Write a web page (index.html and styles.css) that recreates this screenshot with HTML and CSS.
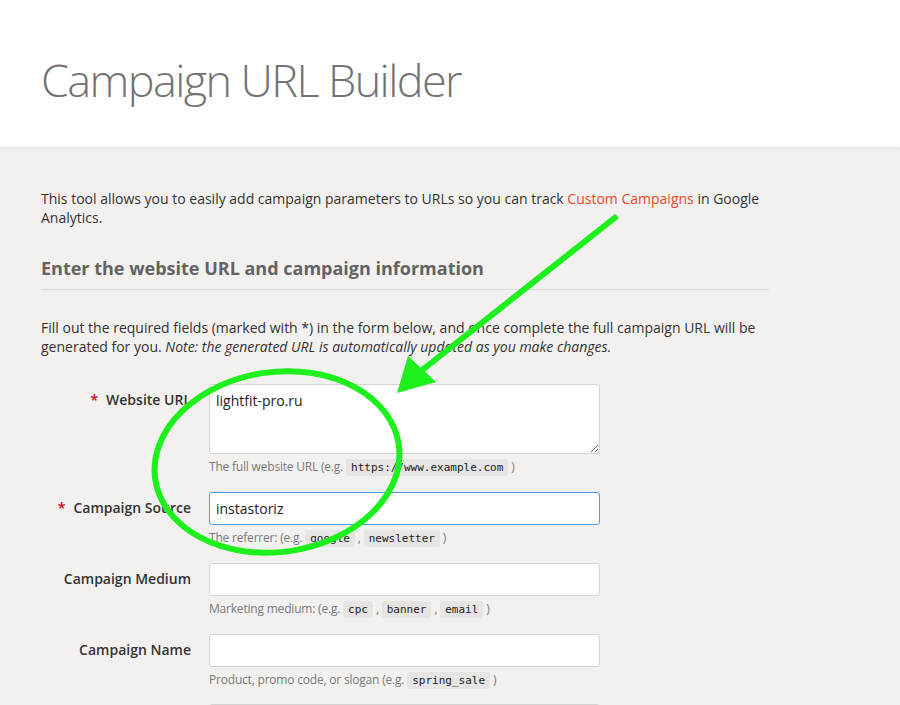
FILE: index.html
```html
<!DOCTYPE html>
<html lang="en">
  <head>
    <meta charset="UTF-8" />
    <meta name="viewport" content="width=device-width, initial-scale=1.0" />
    <title>Campaign URL Builder</title>
    <link rel="stylesheet" href="styles.css">
  </head>
  <body>
    <header class="page-header">
      <h1>Campaign URL Builder</h1>
    </header>

    <main class="content">
      <p class="intro">
        This tool allows you to easily add campaign parameters to URLs so you can track
        <a href="#">Custom Campaigns</a> in Google Analytics.
      </p>

      <h2 class="section-title">Enter the website URL and campaign information</h2>

      <p class="intro">
        Fill out the required fields (marked with *) in the form below, and once complete the full campaign URL will be
        generated for you. <em>Note: the generated URL is automatically updated as you make changes.</em>
      </p>

      <form class="builder">
        <div class="field">
          <label for="url" class="required">Website URL</label>
          <div class="control">
            <textarea id="url" rows="3" spellcheck="false">lightfit-pro.ru</textarea>
            <div class="help">The full website URL (e.g. <code>https://www.example.com</code> )</div>
          </div>
        </div>

        <div class="field">
          <label for="source" class="required">Campaign Source</label>
          <div class="control">
            <input type="text" id="source" class="focused" value="instastoriz" autofocus />
            <div class="help">The referrer: (e.g. <code>google</code> , <code>newsletter</code> )</div>
          </div>
        </div>

        <div class="field">
          <label for="medium">Campaign Medium</label>
          <div class="control">
            <input type="text" id="medium" />
            <div class="help">Marketing medium: (e.g. <code>cpc</code> , <code>banner</code> , <code>email</code> )</div>
          </div>
        </div>

        <div class="field short">
          <label for="name">Campaign Name</label>
          <div class="control">
            <input type="text" id="name" />
            <div class="help">Product, promo code, or slogan (e.g. <code>spring_sale</code> )</div>
          </div>
        </div>

        <div class="field">
          <label for="term">Campaign Term</label>
          <div class="control">
            <input type="text" id="term" />
          </div>
        </div>
      </form>
    </main>

    <!-- hand-drawn markup on top of the screenshot -->
    <svg class="markup" width="900" height="705" viewBox="0 0 900 705">
      <line x1="617" y1="216" x2="412" y2="378" />
      <polygon points="397,393 408,356 436,382" />
      <ellipse cx="277" cy="462" rx="123" ry="90" transform="rotate(-8 277 462)" />
    </svg>
  </body>
</html>
```

FILE: styles.css
```css
body {
  margin: 0;
  font-family: "Open Sans", Arial, sans-serif;
  font-size: 14px;
  color: #333;
  background-color: #f2f1f0;
  position: relative;
  height: 705px;
  overflow: hidden;
}
.page-header {
  background-color: #fff;
  height: 147px;
  box-shadow: 0 1px 3px rgba(0, 0, 0, 0.08);
}
.page-header h1 {
  margin: 0;
  padding: 49px 0 0 41px;
  font-size: 45px;
  font-weight: 300;
  color: #737373;
  line-height: normal;
  letter-spacing: -1.6px;
}
.content {
  width: 728px;
  padding: 42px 0 0 41px;
}
.intro {
  margin: 0;
  line-height: 19px;
}
.intro a {
  color: #e8482b;
  text-decoration: none;
}
.section-title {
  margin: 29px 0 28px;
  padding-bottom: 9px;
  font-size: 18px;
  line-height: 24px;
  color: #636363;
  border-bottom: 1px solid #dcdbda;
}
.builder {
  margin-top: 28px;
}
.field {
  display: grid;
  grid-template-columns: 150px 391px;
  column-gap: 18px;
  margin-bottom: 15px;
}
.field.short {
  margin-bottom: 14px;
}
.field label {
  text-align: right;
  font-weight: 600;
  line-height: 20px;
  padding-top: 6px;
  color: #333;
}
.field label.required::before {
  content: "*";
  color: #d0021b;
  margin-right: 8px;
}
.field input[type="text"],
.field textarea {
  display: block;
  width: 100%;
  box-sizing: border-box;
  border: 1px solid #d3d3d3;
  border-radius: 3px;
  background-color: #fff;
  font-family: "Open Sans", Arial, sans-serif;
  font-size: 14px;
  color: #222;
  padding: 6px 6px;
  margin: 0;
  outline: none;
}
.field input[type="text"] {
  height: 33px;
}
.field textarea {
  height: 70px;
  resize: vertical;
}
.field input[type="text"].focused {
  border-color: #4d9be6;
}
.help {
  margin-top: 3px;
  height: 20px;
  font-size: 12px;
  line-height: 20px;
  color: #7a7a7a;
  letter-spacing: -0.2px;
}
.help code {
  font-family: "DejaVu Sans Mono", "Liberation Mono", monospace;
  font-size: 11px;
  letter-spacing: 0;
  color: #222;
  background-color: #e6e5e4;
  border-radius: 2px;
  padding: 2px 5px;
}
.markup {
  position: absolute;
  left: 0;
  top: 0;
  pointer-events: none;
}
.markup line,
.markup ellipse {
  stroke: #1ef01e;
  stroke-width: 6;
  fill: none;
}
.markup polygon {
  fill: #1ef01e;
}
```
